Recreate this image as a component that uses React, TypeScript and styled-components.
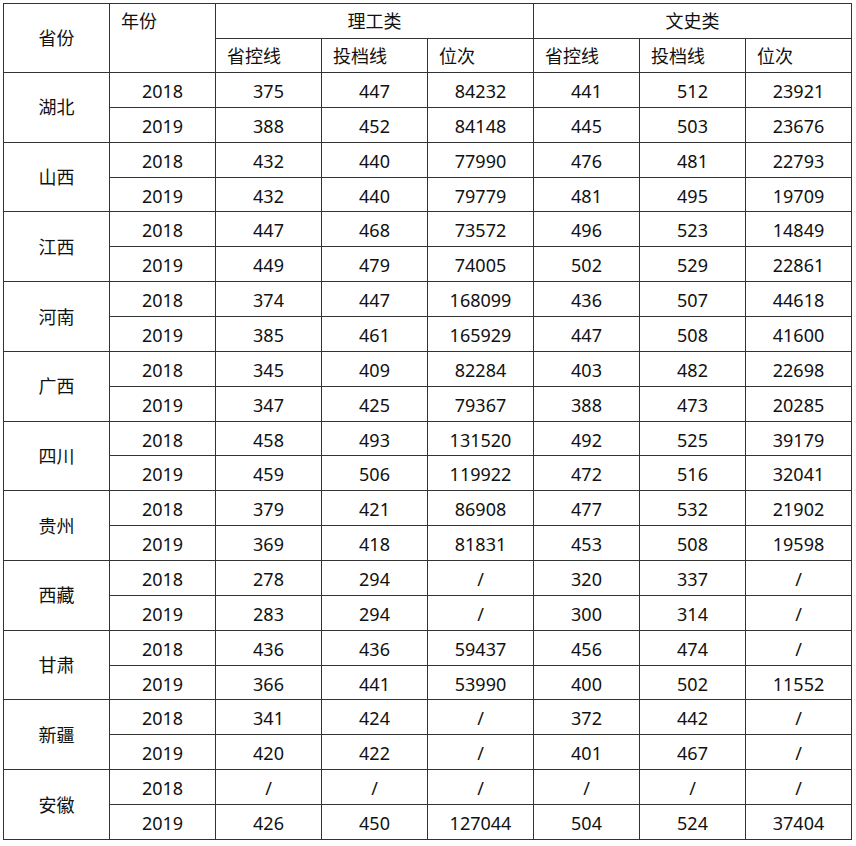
import styled, { createGlobalStyle } from "styled-components";

type Row = { year: string; values: string[] };
type Province = { name: string; rows: Row[] };

const provinces: Province[] = [
  { name: "湖北", rows: [
    { year: "2018", values: ["375", "447", "84232", "441", "512", "23921"] },
    { year: "2019", values: ["388", "452", "84148", "445", "503", "23676"] },
  ] },
  { name: "山西", rows: [
    { year: "2018", values: ["432", "440", "77990", "476", "481", "22793"] },
    { year: "2019", values: ["432", "440", "79779", "481", "495", "19709"] },
  ] },
  { name: "江西", rows: [
    { year: "2018", values: ["447", "468", "73572", "496", "523", "14849"] },
    { year: "2019", values: ["449", "479", "74005", "502", "529", "22861"] },
  ] },
  { name: "河南", rows: [
    { year: "2018", values: ["374", "447", "168099", "436", "507", "44618"] },
    { year: "2019", values: ["385", "461", "165929", "447", "508", "41600"] },
  ] },
  { name: "广西", rows: [
    { year: "2018", values: ["345", "409", "82284", "403", "482", "22698"] },
    { year: "2019", values: ["347", "425", "79367", "388", "473", "20285"] },
  ] },
  { name: "四川", rows: [
    { year: "2018", values: ["458", "493", "131520", "492", "525", "39179"] },
    { year: "2019", values: ["459", "506", "119922", "472", "516", "32041"] },
  ] },
  { name: "贵州", rows: [
    { year: "2018", values: ["379", "421", "86908", "477", "532", "21902"] },
    { year: "2019", values: ["369", "418", "81831", "453", "508", "19598"] },
  ] },
  { name: "西藏", rows: [
    { year: "2018", values: ["278", "294", "/", "320", "337", "/"] },
    { year: "2019", values: ["283", "294", "/", "300", "314", "/"] },
  ] },
  { name: "甘肃", rows: [
    { year: "2018", values: ["436", "436", "59437", "456", "474", "/"] },
    { year: "2019", values: ["366", "441", "53990", "400", "502", "11552"] },
  ] },
  { name: "新疆", rows: [
    { year: "2018", values: ["341", "424", "/", "372", "442", "/"] },
    { year: "2019", values: ["420", "422", "/", "401", "467", "/"] },
  ] },
  { name: "安徽", rows: [
    { year: "2018", values: ["/", "/", "/", "/", "/", "/"] },
    { year: "2019", values: ["426", "450", "127044", "504", "524", "37404"] },
  ] },
];

const subHeads = ["省控线", "投档线", "位次", "省控线", "投档线", "位次"];

export default function App() {
  return (
    <>
      <GlobalStyle />
      <Page>
        <Table>
          <colgroup>
            {Array.from({ length: 8 }).map((_, i) => (
              <col key={i} style={{ width: 106 }} />
            ))}
          </colgroup>
          <thead>
            <HeadRow>
              <HeadCell rowSpan={2} $align="center">省份</HeadCell>
              <HeadCell rowSpan={2} $align="left" $top>年份</HeadCell>
              <HeadCell colSpan={3} $align="center">理工类</HeadCell>
              <HeadCell colSpan={3} $align="center">文史类</HeadCell>
            </HeadRow>
            <HeadRow>
              {subHeads.map((h, i) => (
                <HeadCell key={i} $align="left">{h}</HeadCell>
              ))}
            </HeadRow>
          </thead>
          <tbody>
            {provinces.map((p) =>
              p.rows.map((r, i) => (
                <DataRow key={p.name + r.year}>
                  {i === 0 && <NameCell rowSpan={2}>{p.name}</NameCell>}
                  <Cell>{r.year}</Cell>
                  {r.values.map((v, j) => (
                    <Cell key={j}>{v}</Cell>
                  ))}
                </DataRow>
              ))
            )}
          </tbody>
        </Table>
      </Page>
    </>
  );
}

const GlobalStyle = createGlobalStyle`
  html, body {
    margin: 0;
    padding: 0;
    background: #ffffff;
  }
`;

const Page = styled.div`
  padding: 3px 0 0 3px;

  font-family: "Noto Sans", "Noto Sans CJK SC", sans-serif;
  font-size: 18px;
  color: #111111;
`;

const Table = styled.table`
  border-collapse: collapse;
  table-layout: fixed;
  width: 848px;
`;

const HeadRow = styled.tr`
  height: 34.5px;
`;

const DataRow = styled.tr`
  height: 34.86px;
`;

const HeadCell = styled.th<{ $align: "left" | "center"; $top?: boolean }>`
  border: 1px solid #333333;
  padding: ${(p) => (p.$top ? "6px 0 0 11px" : p.$align === "left" ? "2px 0 0 11px" : "0")};
  text-align: ${(p) => p.$align};
  vertical-align: ${(p) => (p.$top ? "top" : "middle")};
  font-weight: 400;
  line-height: 22px;
`;

const Cell = styled.td`
  border: 1px solid #333333;
  padding: 2px 0 0;
  text-align: center;
  vertical-align: middle;
  line-height: 22px;
`;

const NameCell = styled(Cell)`
  padding: 0;
`;
